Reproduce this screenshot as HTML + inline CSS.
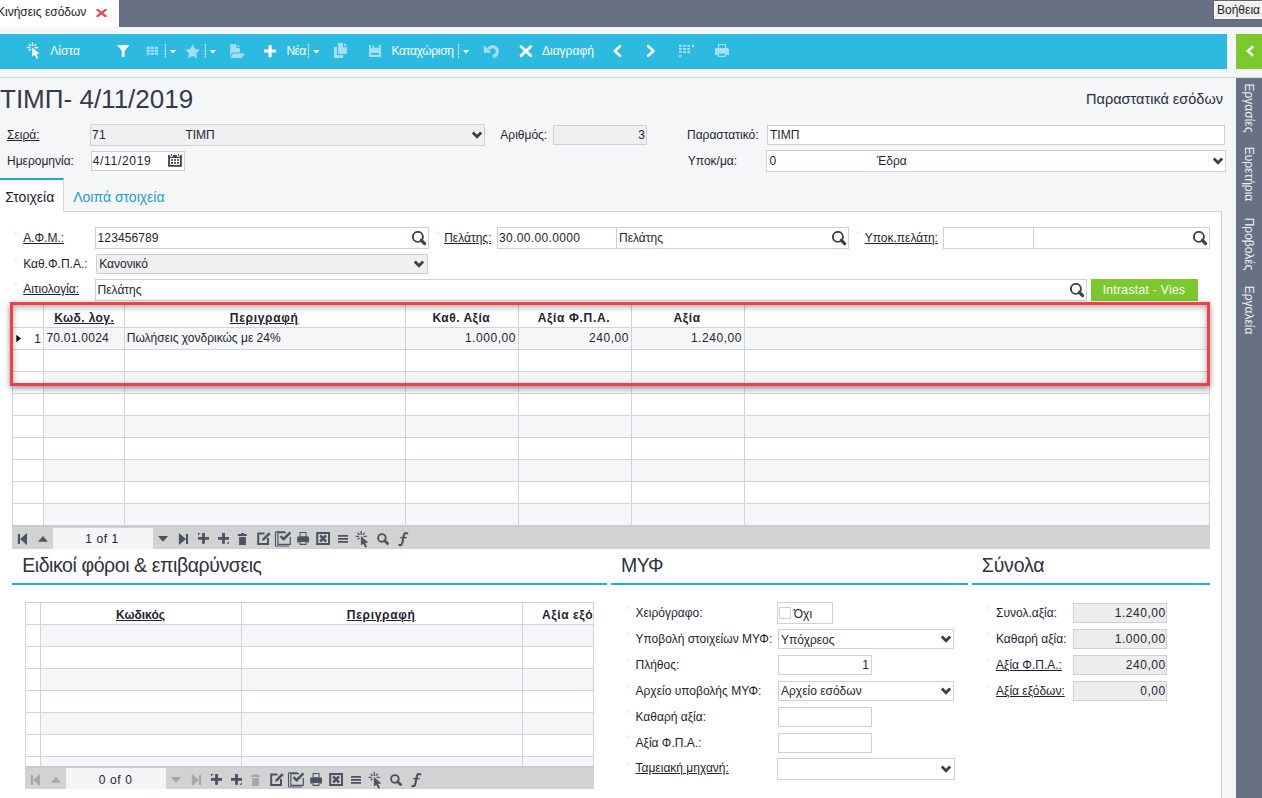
<!DOCTYPE html><html><head><meta charset="utf-8"><style>
html,body{margin:0;padding:0;}
body{width:1262px;height:798px;overflow:hidden;position:relative;background:#f5f6f8;font-family:'Liberation Sans', sans-serif;}
u{text-decoration:underline;text-underline-offset:1px;}
</style></head><body>
<div style="position:absolute;left:0px;top:0px;width:1262px;height:27px;background:#687184"></div>
<div style="position:absolute;left:0px;top:0px;width:119px;height:27px;background:#ffffff"></div>
<div style="position:absolute;left:-3px;top:6.34px;font-size:12px;line-height:1;color:#1a1a2a;font-weight:400;white-space:nowrap;">Κινήσεις εσόδων</div>
<svg style="position:absolute;left:96px;top:9px;" width="11" height="8" viewBox="0 0 11 8"><path d="M1.5 0.8 L9.5 7.2 M9.5 0.8 L1.5 7.2" stroke="#e8475a" stroke-width="2.2" stroke-linecap="square"/></svg>
<div style="position:absolute;left:1213px;top:0px;width:52px;height:20px;background:#f0f0f0;border:1px solid #646464;box-shadow:inset 0 0 0 1px #fff;box-sizing:border-box"></div>
<div style="position:absolute;left:1217px;top:3.84px;font-size:12px;line-height:1;color:#222;font-weight:400;white-space:nowrap;">Βοήθεια</div>
<div style="position:absolute;left:0px;top:34px;width:1227px;height:35px;background:#2dbae0"></div>
<div style="position:absolute;left:1236px;top:34px;width:26px;height:35px;background:#7cc92e"></div>
<svg style="position:absolute;left:1243px;top:44px;" width="14" height="14" viewBox="0 0 14 14"><path d="M10.2 2.2 L4.8 7 L10.2 11.8" stroke="#fff" stroke-width="2.5" fill="none"/></svg>
<svg style="position:absolute;left:0;top:34px" width="1227" height="35" viewBox="0 34 1227 35"><g stroke="#ffffff" stroke-width="1.3" stroke-linecap="round" fill="none"><path d="M32.5 42.6V45.6 M27.4 47.5H29.8 M35.3 47.5H37.7 M29.3 44.4L30.6 45.6 M34.4 45.6L35.6 44.4 M29.4 50.2L30.6 49.3"/></g><path d="M32.2 47.3 L32.2 56.6 L34.6 55 L36.6 58.9 L38.3 58 L36.4 54.3 L39.6 53.8 Z" fill="#ffffff"/><path d="M117 45 H129.4 L124.6 51 V56.8 H121.8 V51 Z" fill="#ffffff"/><rect x="146.6" y="46.7" width="3.1" height="2.2" fill="#a6dff2"/><rect x="146.6" y="49.7" width="3.1" height="2.2" fill="#a6dff2"/><rect x="146.6" y="52.7" width="3.1" height="2.2" fill="#a6dff2"/><rect x="150.7" y="46.7" width="3.1" height="2.2" fill="#a6dff2"/><rect x="150.7" y="49.7" width="3.1" height="2.2" fill="#a6dff2"/><rect x="150.7" y="52.7" width="3.1" height="2.2" fill="#a6dff2"/><rect x="154.8" y="46.7" width="3.1" height="2.2" fill="#a6dff2"/><rect x="154.8" y="49.7" width="3.1" height="2.2" fill="#a6dff2"/><rect x="154.8" y="52.7" width="3.1" height="2.2" fill="#a6dff2"/><line x1="165.4" y1="43.8" x2="165.4" y2="58" stroke="#ffffff" stroke-width="1.2" stroke-dasharray="1.9 1.1"/><path d="M169.8 50 H176.10000000000002 L172.95000000000002 53.6 Z" fill="#ffffff"/><line x1="205.4" y1="43.8" x2="205.4" y2="58" stroke="#ffffff" stroke-width="1.2" stroke-dasharray="1.9 1.1"/><path d="M209.6 50 H215.9 L212.75 53.6 Z" fill="#ffffff"/><line x1="308.5" y1="43.8" x2="308.5" y2="58" stroke="#ffffff" stroke-width="1.2" stroke-dasharray="1.9 1.1"/><path d="M313.2 50 H319.5 L316.34999999999997 53.6 Z" fill="#ffffff"/><line x1="458.5" y1="43.8" x2="458.5" y2="58" stroke="#ffffff" stroke-width="1.2" stroke-dasharray="1.9 1.1"/><path d="M462.9 50 H469.2 L466.04999999999995 53.6 Z" fill="#ffffff"/><polygon points="192.60,44.50 194.89,48.94 199.83,49.75 196.31,53.31 197.07,58.25 192.60,56.00 188.13,58.25 188.89,53.31 185.37,49.75 190.31,48.94" fill="#a6dff2"/><path d="M230.2 44.2 H236.3 V48 H239.9 V52.4 H232.4 L230.2 56.5 Z" fill="#a6dff2"/><path d="M237.3 44.2 L239.9 46.9 H237.3 Z" fill="#a6dff2"/><path d="M233.2 53.4 H244.9 L241.7 58 H230.4 Z" fill="#a6dff2"/><path d="M268.6 44.9 H271.6 V49.6 H276.2 V52.6 H271.6 V57.2 H268.6 V52.6 H263.9 V49.6 H268.6 Z" fill="#ffffff"/><path d="M334 46.9 H337 V55.1 H343.1 V58 H334 Z" fill="#a6dff2"/><path d="M338.1 43 H343 V47.2 H347 V54 H338.1 Z" fill="#a6dff2"/><path d="M344.1 43 L347 46.1 H344.1 Z" fill="#a6dff2"/><path d="M369 45 H371 V47.8 H372.8 V45 H374 V47.8 H379 V45 H381 V57 H369 Z M371 52.9 V54.8 H379 V52.9 Z" fill="#a6dff2" fill-rule="evenodd"/><path d="M488.44 49.1 A4.8 4.8 0 1 1 492.6 56.3" stroke="#a6dff2" stroke-width="3.1" fill="none"/><path d="M483.9 45.2 V52.8 H491.3 Z" fill="#a6dff2"/><path d="M521 46.5 L530.8 55.8 M530.8 46.5 L521 55.8" stroke="#ffffff" stroke-width="2.8" stroke-linecap="round"/><path d="M620 46.2 L614.8 51 L620 55.8" stroke="#ffffff" stroke-width="2.6" fill="none" stroke-linecap="round" stroke-linejoin="round"/><path d="M648.2 46.2 L653.4 51 L648.2 55.8" stroke="#ffffff" stroke-width="2.6" fill="none" stroke-linecap="round" stroke-linejoin="round"/><rect x="679.0" y="44.9" width="2.8" height="2" fill="#a6dff2"/><rect x="679.0" y="48.0" width="2.8" height="2" fill="#a6dff2"/><rect x="679.0" y="51.1" width="2.8" height="2" fill="#a6dff2"/><rect x="683.1" y="44.9" width="2.8" height="2" fill="#a6dff2"/><rect x="683.1" y="48.0" width="2.8" height="2" fill="#a6dff2"/><rect x="683.1" y="51.1" width="2.8" height="2" fill="#a6dff2"/><rect x="687.2" y="44.9" width="2.8" height="2" fill="#a6dff2"/><rect x="687.2" y="48.0" width="2.8" height="2" fill="#a6dff2"/><rect x="687.2" y="51.1" width="2.8" height="2" fill="#a6dff2"/><path d="M692.1 44.1 V48 L694.7 46 Z" fill="#a6dff2"/><path d="M677.9 55.2 H682 L680 57.5 Z" fill="#a6dff2"/><path d="M718.1 44 H726 V50 H718.1 Z M719.2 45.1 V49 H724.9 V45.1 Z" fill="#a6dff2" fill-rule="evenodd"/><path d="M716.5 48 H727.4 Q728.9 48 728.9 49.5 V55 H726 V53.6 H718.1 V55 H715 V49.5 Q715 48 716.5 48 Z" fill="#a6dff2"/><path d="M718.1 53.6 H726 V57 H718.1 Z M719.1 54.1 V55.7 H724.9 V54.1 Z" fill="#a6dff2" fill-rule="evenodd"/></svg>
<div style="position:absolute;left:50.3px;top:45.24px;font-size:12px;line-height:1;color:#ffffff;font-weight:400;white-space:nowrap;">Λίστα</div>
<div style="position:absolute;left:286.5px;top:45.44px;font-size:12px;line-height:1;color:#ffffff;font-weight:400;white-space:nowrap;letter-spacing:-0.6px">Νέα</div>
<div style="position:absolute;left:391.5px;top:45.44px;font-size:12px;line-height:1;color:#ffffff;font-weight:400;white-space:nowrap;letter-spacing:-0.3px">Καταχώριση</div>
<div style="position:absolute;left:542px;top:45.24px;font-size:12px;line-height:1;color:#ffffff;font-weight:400;white-space:nowrap;">Διαγραφή</div>
<div style="position:absolute;left:0px;top:77px;width:1262px;height:1px;background:#d5d7db"></div>
<div style="position:absolute;left:1236px;top:78px;width:26px;height:720px;background:#687184"></div>
<div style="position:absolute;left:1189px;top:101.1px;width:120px;height:14px;line-height:14px;text-align:center;font-size:12px;color:#eef0f4;white-space:nowrap;transform:rotate(90deg);transform-origin:60px 7px">Εργασίες</div>
<div style="position:absolute;left:1189px;top:166.8px;width:120px;height:14px;line-height:14px;text-align:center;font-size:12px;color:#eef0f4;white-space:nowrap;transform:rotate(90deg);transform-origin:60px 7px">Ευρετήρια</div>
<div style="position:absolute;left:1189px;top:236.8px;width:120px;height:14px;line-height:14px;text-align:center;font-size:12px;color:#eef0f4;white-space:nowrap;transform:rotate(90deg);transform-origin:60px 7px">Προβολές</div>
<div style="position:absolute;left:1189px;top:302.9px;width:120px;height:14px;line-height:14px;text-align:center;font-size:12px;color:#eef0f4;white-space:nowrap;transform:rotate(90deg);transform-origin:60px 7px">Εργαλεία</div>
<div style="position:absolute;left:0px;top:85.69px;font-size:26px;line-height:1;color:#363949;font-weight:400;white-space:nowrap;">ΤΙΜΠ- 4/11/2019</div>
<div style="position:absolute;right:39px;text-align:right;top:91.73px;font-size:14.5px;line-height:1;color:#2a2d3c;font-weight:400;white-space:nowrap;">Παραστατικά εσόδων</div>
<div style="position:absolute;left:7px;top:128.84px;font-size:12px;line-height:1;color:#1f2233;font-weight:400;white-space:nowrap;"><u>Σειρά:</u></div>
<div style="position:absolute;left:90px;top:124px;width:395px;height:22px;background:#f0f0f0;border:1px solid #cfd0d3;box-sizing:border-box"></div>
<div style="position:absolute;left:92px;top:128.84px;font-size:12px;line-height:1;color:#1f2233;font-weight:400;white-space:nowrap;letter-spacing:0.3px">71</div>
<div style="position:absolute;left:185.4px;top:128.84px;font-size:12px;line-height:1;color:#1f2233;font-weight:400;white-space:nowrap;">ΤΙΜΠ</div>
<svg style="position:absolute;left:470.5px;top:130.70000000000002px;" width="12" height="9" viewBox="0 0 12 9"><path d="M1.8 1.6 L6 5.8 L10.2 1.6" stroke="#3b3f4a" stroke-width="2.8" fill="none" stroke-linejoin="miter" stroke-linecap="butt"/></svg>
<div style="position:absolute;left:500.3px;top:128.84px;font-size:12px;line-height:1;color:#1f2233;font-weight:400;white-space:nowrap;">Αριθμός:</div>
<div style="position:absolute;left:553px;top:125px;width:94px;height:20px;background:#efefef;border:1px solid #cfd0d3;box-sizing:border-box"></div>
<div style="position:absolute;right:617px;text-align:right;top:128.84px;font-size:12px;line-height:1;color:#1f2233;font-weight:400;white-space:nowrap;">3</div>
<div style="position:absolute;left:687px;top:128.84px;font-size:12px;line-height:1;color:#1f2233;font-weight:400;white-space:nowrap;">Παραστατικό:</div>
<div style="position:absolute;left:767px;top:125px;width:458px;height:20px;background:#ffffff;border:1px solid #cfd0d3;box-sizing:border-box"></div>
<div style="position:absolute;left:770px;top:128.84px;font-size:12px;line-height:1;color:#1f2233;font-weight:400;white-space:nowrap;">ΤΙΜΠ</div>
<div style="position:absolute;left:7px;top:154.64px;font-size:12px;line-height:1;color:#1f2233;font-weight:400;white-space:nowrap;">Ημερομηνία:</div>
<div style="position:absolute;left:91px;top:151px;width:94px;height:20px;background:#ffffff;border:1px solid #cfd0d3;box-sizing:border-box"></div>
<div style="position:absolute;left:92.7px;top:154.54px;font-size:12px;line-height:1;color:#1f2233;font-weight:400;white-space:nowrap;letter-spacing:0.7px">4/11/2019</div>
<svg style="position:absolute;left:168px;top:154px;" width="14" height="13" viewBox="0 0 14 13"><path d="M0.1 2.8 H13.8 V12.7 H0.1 Z M1.9 4 V11 H12 V4 Z" fill="#3b3f4a" fill-rule="evenodd"/><rect x="0.1" y="0.9" width="1.8" height="2.6" fill="#3b3f4a"/><rect x="5" y="0.9" width="3.9" height="2.6" fill="#3b3f4a"/><rect x="12" y="0.9" width="1.8" height="2.6" fill="#3b3f4a"/><rect x="3.1" y="0" width="1" height="1.9" fill="#3b3f4a"/><rect x="10.1" y="0" width="1" height="1.9" fill="#3b3f4a"/><rect x="3.1" y="5.1" width="1.8" height="1.8" fill="#3b3f4a"/><rect x="3.1" y="8.0" width="1.8" height="1.8" fill="#3b3f4a"/><rect x="6.1" y="5.1" width="1.8" height="1.8" fill="#3b3f4a"/><rect x="6.1" y="8.0" width="1.8" height="1.8" fill="#3b3f4a"/><rect x="9.1" y="5.1" width="1.8" height="1.8" fill="#3b3f4a"/><rect x="9.1" y="8.0" width="1.8" height="1.8" fill="#3b3f4a"/></svg>
<div style="position:absolute;left:687.8px;top:154.84px;font-size:12px;line-height:1;color:#1f2233;font-weight:400;white-space:nowrap;">Υποκ/μα:</div>
<div style="position:absolute;left:766px;top:150px;width:460px;height:22px;background:#ffffff;border:1px solid #cfd0d3;box-sizing:border-box"></div>
<div style="position:absolute;left:769.5px;top:154.84px;font-size:12px;line-height:1;color:#1f2233;font-weight:400;white-space:nowrap;">0</div>
<div style="position:absolute;left:876.8px;top:154.84px;font-size:12px;line-height:1;color:#1f2233;font-weight:400;white-space:nowrap;">Έδρα</div>
<svg style="position:absolute;left:1211.5px;top:156.8px;" width="12" height="9" viewBox="0 0 12 9"><path d="M1.8 1.6 L6 5.8 L10.2 1.6" stroke="#3b3f4a" stroke-width="2.8" fill="none" stroke-linejoin="miter" stroke-linecap="butt"/></svg>
<div style="position:absolute;left:0px;top:211px;width:1222px;height:587px;background:#ffffff;border-top:1px solid #d3d4d7;border-right:1px solid #d3d4d7;box-sizing:border-box"></div>
<div style="position:absolute;left:0px;top:178px;width:64px;height:34px;background:#ffffff;border-top:2px solid #19a8d8;border-right:1px solid #d3d4d7;box-sizing:border-box"></div>
<div style="position:absolute;left:5.3px;top:189.95px;font-size:14px;line-height:1;color:#1e2030;font-weight:400;white-space:nowrap;">Στοιχεία</div>
<div style="position:absolute;left:73.2px;top:189.95px;font-size:14px;line-height:1;color:#1a9fd2;font-weight:400;white-space:nowrap;">Λοιπά στοιχεία</div>
<div style="position:absolute;left:13.5px;top:229.69px;font-size:11px;line-height:1;color:#eceef2;font-weight:400;white-space:nowrap;">*</div>
<div style="position:absolute;left:23.2px;top:231.84px;font-size:12px;line-height:1;color:#1f2233;font-weight:400;white-space:nowrap;"><u>Α.Φ.Μ.:</u></div>
<div style="position:absolute;left:95px;top:227px;width:334px;height:22px;background:#ffffff;border:1px solid #cfd0d3;box-sizing:border-box"></div>
<div style="position:absolute;left:97.6px;top:231.64px;font-size:12px;line-height:1;color:#1f2233;font-weight:400;white-space:nowrap;letter-spacing:0.1px">123456789</div>
<svg style="position:absolute;left:412px;top:231px;" width="15" height="15" viewBox="0 0 15 15"><circle cx="5.9" cy="5.9" r="5" stroke="#3b3f4a" stroke-width="1.9" fill="none"/><path d="M9.3 9.3 L12.6 12.6" stroke="#3b3f4a" stroke-width="3.2" stroke-linecap="round"/></svg>
<div style="position:absolute;left:435.5px;top:229.69px;font-size:11px;line-height:1;color:#eceef2;font-weight:400;white-space:nowrap;">*</div>
<div style="position:absolute;left:444.2px;top:231.84px;font-size:12px;line-height:1;color:#1f2233;font-weight:400;white-space:nowrap;"><u>Πελάτης:</u></div>
<div style="position:absolute;left:497px;top:227px;width:120px;height:22px;background:#ffffff;border:1px solid #cfd0d3;box-sizing:border-box"></div>
<div style="position:absolute;left:499px;top:231.64px;font-size:12px;line-height:1;color:#1f2233;font-weight:400;white-space:nowrap;letter-spacing:0.35px">30.00.00.0000</div>
<div style="position:absolute;left:616px;top:227px;width:233px;height:22px;background:#ffffff;border:1px solid #cfd0d3;box-sizing:border-box"></div>
<div style="position:absolute;left:619px;top:231.64px;font-size:12px;line-height:1;color:#1f2233;font-weight:400;white-space:nowrap;">Πελάτης</div>
<svg style="position:absolute;left:832px;top:231px;" width="15" height="15" viewBox="0 0 15 15"><circle cx="5.9" cy="5.9" r="5" stroke="#3b3f4a" stroke-width="1.9" fill="none"/><path d="M9.3 9.3 L12.6 12.6" stroke="#3b3f4a" stroke-width="3.2" stroke-linecap="round"/></svg>
<div style="position:absolute;left:855.5px;top:229.69px;font-size:11px;line-height:1;color:#eceef2;font-weight:400;white-space:nowrap;">*</div>
<div style="position:absolute;left:864.7px;top:231.84px;font-size:12px;line-height:1;color:#1f2233;font-weight:400;white-space:nowrap;"><u>Υποκ.πελάτη:</u></div>
<div style="position:absolute;left:943px;top:227px;width:91px;height:22px;background:#ffffff;border:1px solid #cfd0d3;box-sizing:border-box"></div>
<div style="position:absolute;left:1033px;top:227px;width:177px;height:22px;background:#ffffff;border:1px solid #cfd0d3;box-sizing:border-box"></div>
<svg style="position:absolute;left:1193px;top:231px;" width="15" height="15" viewBox="0 0 15 15"><circle cx="5.9" cy="5.9" r="5" stroke="#3b3f4a" stroke-width="1.9" fill="none"/><path d="M9.3 9.3 L12.6 12.6" stroke="#3b3f4a" stroke-width="3.2" stroke-linecap="round"/></svg>
<div style="position:absolute;left:13.5px;top:255.69px;font-size:11px;line-height:1;color:#eceef2;font-weight:400;white-space:nowrap;">*</div>
<div style="position:absolute;left:23.2px;top:257.84px;font-size:12px;line-height:1;color:#1f2233;font-weight:400;white-space:nowrap;">Καθ.Φ.Π.Α.:</div>
<div style="position:absolute;left:96px;top:254px;width:332px;height:20px;background:#f0f0f0;border:1px solid #cfd0d3;box-sizing:border-box"></div>
<div style="position:absolute;left:99.2px;top:258.44px;font-size:12px;line-height:1;color:#1f2233;font-weight:400;white-space:nowrap;">Κανονικό</div>
<svg style="position:absolute;left:412.5px;top:259.79999999999995px;" width="12" height="9" viewBox="0 0 12 9"><path d="M1.8 1.6 L6 5.8 L10.2 1.6" stroke="#3b3f4a" stroke-width="2.8" fill="none" stroke-linejoin="miter" stroke-linecap="butt"/></svg>
<div style="position:absolute;left:13.5px;top:280.69px;font-size:11px;line-height:1;color:#eceef2;font-weight:400;white-space:nowrap;">*</div>
<div style="position:absolute;left:23.2px;top:283.14px;font-size:12px;line-height:1;color:#1f2233;font-weight:400;white-space:nowrap;"><u>Αιτιολογία:</u></div>
<div style="position:absolute;left:95px;top:279px;width:992px;height:22px;background:#ffffff;border:1px solid #cfd0d3;box-sizing:border-box"></div>
<div style="position:absolute;left:97.6px;top:283.84px;font-size:12px;line-height:1;color:#1f2233;font-weight:400;white-space:nowrap;">Πελάτης</div>
<svg style="position:absolute;left:1070px;top:283px;" width="15" height="15" viewBox="0 0 15 15"><circle cx="5.9" cy="5.9" r="5" stroke="#3b3f4a" stroke-width="1.9" fill="none"/><path d="M9.3 9.3 L12.6 12.6" stroke="#3b3f4a" stroke-width="3.2" stroke-linecap="round"/></svg>
<div style="position:absolute;left:1091px;top:279px;width:107px;height:22px;background:#7cc92e"></div>
<div style="position:absolute;left:844px;width:600px;text-align:center;top:284.34px;font-size:12px;line-height:1;color:#ffffff;font-weight:400;white-space:nowrap;letter-spacing:0.35px">Intrastat - Vies</div>
<div style="position:absolute;left:12px;top:305px;width:1198px;height:220px;background:#ffffff"></div>
<div style="position:absolute;left:44px;top:328px;width:1165px;height:21px;background:#f5f6f8"></div>
<div style="position:absolute;left:44px;top:372px;width:1165px;height:21px;background:#f5f6f8"></div>
<div style="position:absolute;left:44px;top:416px;width:1165px;height:21px;background:#f5f6f8"></div>
<div style="position:absolute;left:44px;top:460px;width:1165px;height:21px;background:#f5f6f8"></div>
<div style="position:absolute;left:44px;top:504px;width:1165px;height:21px;background:#f5f6f8"></div>
<div style="position:absolute;left:12px;top:327px;width:1198px;height:1px;background:#d2d3d6"></div>
<div style="position:absolute;left:12px;top:349px;width:1198px;height:1px;background:#d2d3d6"></div>
<div style="position:absolute;left:12px;top:371px;width:1198px;height:1px;background:#d2d3d6"></div>
<div style="position:absolute;left:12px;top:393px;width:1198px;height:1px;background:#d2d3d6"></div>
<div style="position:absolute;left:12px;top:415px;width:1198px;height:1px;background:#d2d3d6"></div>
<div style="position:absolute;left:12px;top:437px;width:1198px;height:1px;background:#d2d3d6"></div>
<div style="position:absolute;left:12px;top:459px;width:1198px;height:1px;background:#d2d3d6"></div>
<div style="position:absolute;left:12px;top:481px;width:1198px;height:1px;background:#d2d3d6"></div>
<div style="position:absolute;left:12px;top:503px;width:1198px;height:1px;background:#d2d3d6"></div>
<div style="position:absolute;left:43px;top:305px;width:1px;height:220px;background:#d2d3d6"></div>
<div style="position:absolute;left:124px;top:305px;width:1px;height:220px;background:#d2d3d6"></div>
<div style="position:absolute;left:405px;top:305px;width:1px;height:220px;background:#d2d3d6"></div>
<div style="position:absolute;left:518px;top:305px;width:1px;height:220px;background:#d2d3d6"></div>
<div style="position:absolute;left:631px;top:305px;width:1px;height:220px;background:#d2d3d6"></div>
<div style="position:absolute;left:744px;top:305px;width:1px;height:220px;background:#d2d3d6"></div>
<div style="position:absolute;left:12px;top:305px;width:1px;height:220px;background:#d2d3d6"></div>
<div style="position:absolute;left:1209px;top:305px;width:1px;height:220px;background:#d2d3d6"></div>
<div style="position:absolute;left:-215.8px;width:600px;text-align:center;top:311.64px;font-size:12px;line-height:1;color:#1f2233;font-weight:700;white-space:nowrap;letter-spacing:0.4px"><u>Κωδ. λογ.</u></div>
<div style="position:absolute;left:-35.80000000000001px;width:600px;text-align:center;top:311.64px;font-size:12px;line-height:1;color:#1f2233;font-weight:700;white-space:nowrap;letter-spacing:0.7px"><u>Περιγραφή</u></div>
<div style="position:absolute;left:161.3px;width:600px;text-align:center;top:311.84px;font-size:12px;line-height:1;color:#1f2233;font-weight:700;white-space:nowrap;letter-spacing:0.5px">Καθ. Αξία</div>
<div style="position:absolute;left:274px;width:600px;text-align:center;top:311.84px;font-size:12px;line-height:1;color:#1f2233;font-weight:700;white-space:nowrap;letter-spacing:0.65px">Αξία Φ.Π.Α.</div>
<div style="position:absolute;left:387.1px;width:600px;text-align:center;top:311.84px;font-size:12px;line-height:1;color:#1f2233;font-weight:700;white-space:nowrap;letter-spacing:0.6px">Αξία</div>
<svg style="position:absolute;left:16px;top:334px;" width="6" height="9" viewBox="0 0 6 9"><path d="M0.3 0.8 L5 4.5 L0.3 8.2 Z" fill="#111"/></svg>
<div style="position:absolute;right:1221px;text-align:right;top:333.44px;font-size:12px;line-height:1;color:#1f2233;font-weight:400;white-space:nowrap;">1</div>
<div style="position:absolute;left:46.4px;top:332.44px;font-size:12px;line-height:1;color:#1f2233;font-weight:400;white-space:nowrap;letter-spacing:0.26px">70.01.0024</div>
<div style="position:absolute;left:126.8px;top:332.44px;font-size:12px;line-height:1;color:#1f2233;font-weight:400;white-space:nowrap;">Πωλήσεις χονδρικώς με 24%</div>
<div style="position:absolute;right:746px;text-align:right;top:332.44px;font-size:12px;line-height:1;color:#1f2233;font-weight:400;white-space:nowrap;letter-spacing:0.55px">1.000,00</div>
<div style="position:absolute;right:633px;text-align:right;top:332.44px;font-size:12px;line-height:1;color:#1f2233;font-weight:400;white-space:nowrap;letter-spacing:0.55px">240,00</div>
<div style="position:absolute;right:520px;text-align:right;top:332.44px;font-size:12px;line-height:1;color:#1f2233;font-weight:400;white-space:nowrap;letter-spacing:0.55px">1.240,00</div>
<div style="position:absolute;left:12px;top:525px;width:1198px;height:24px;background:#d2d2d3;border-top:2px solid #cacbce;box-sizing:border-box"></div>
<div style="position:absolute;left:53px;top:528px;width:100px;height:21px;background:#f4f5f7"></div>
<div style="position:absolute;left:-198px;width:600px;text-align:center;top:533.34px;font-size:12px;line-height:1;color:#1f2233;font-weight:400;white-space:nowrap;letter-spacing:0.6px">1 of 1</div>
<svg style="position:absolute;left:0;top:0" width="1262" height="798"><g transform="translate(0 0)"><path d="M17.9 534 H20 V544 H17.9 Z M20 539 L27 533 V544.9 Z" fill="#4b5263"/><path d="M38 541.8 H47.9 L43 536.1 Z" fill="#4b5263"/><path d="M157.9 535.9 H168.1 L163 541.7 Z" fill="#4b5263"/><path d="M178.9 533.1 V545 L186 539 Z M186 533.9 H188 V544 H186 Z" fill="#4b5263"/><path d="M202.1 533 H204.9 V537 H209 V539.8 H204.9 V543.8 H202.1 V539.8 H198 V537 H202.1 Z M198 533 H200.6 L198 535.6 Z" fill="#4b5263"/><path d="M222.1 533 H224.9 V537 H229 V539.8 H224.9 V543.8 H222.1 V539.8 H218 V537 H222.1 Z M229 541.3 V543.8 H226.5 Z" fill="#4b5263"/><path d="M241 533 H244 V534 H246.8 V536 H238 V534 H241 Z M239.1 537.1 H245.9 V544.9 H239.1 Z" fill="#4b5263"/><path d="M264.5 533.6 H258.2 V543.9 H268 V538" stroke="#4b5263" stroke-width="2" fill="none"/><path d="M262 541 L262.8 538.2 L268.8 532.2 L270.6 534 L264.6 540 Z" fill="#4b5263"/><path d="M284.9 531.7 H276.2 Q275.5 531.7 275.5 532.4 V545.3 Q275.5 546 276.2 546 H289.2" stroke="#4b5263" stroke-width="1.1" fill="none"/><path d="M286 532.6 H277.9 V544.4 H290.3 V537" stroke="#4b5263" stroke-width="1.2" fill="none"/><path d="M280.6 536.2 L283.6 539.2 L290.4 532.4" stroke="#4b5263" stroke-width="2.4" fill="none"/><path d="M299.6 532 H306.6 V537 H299.6 Z M300.6 533 V536.5 H305.6 V533 Z" fill="#4b5263" fill-rule="evenodd"/><path d="M298 536.5 H308.2 Q309 536.5 309 537.3 V542.6 H306.6 V541 H299.6 V542.6 H297.2 V537.3 Q297.2 536.5 298 536.5 Z" fill="#4b5263"/><path d="M299.6 541 H306.6 V545 H299.6 Z M300.6 542 V543.8 H305.6 V542 Z" fill="#4b5263" fill-rule="evenodd"/><path d="M317.2 533 H329 V543.9 H317.2 Z" stroke="#4b5263" stroke-width="2" fill="none"/><path d="M320.1 535.4 L326.1 541.5 M326.1 535.4 L320.1 541.5" stroke="#4b5263" stroke-width="2.5"/><path d="M338 535.9 H348 M338 538.8 H348 M338 541.8 H348" stroke="#4b5263" stroke-width="1.8"/><g transform="translate(328.7 488.8)"><g stroke="#4b5263" stroke-width="1.3" stroke-linecap="round" fill="none"><path d="M32.5 42.6V45.6 M27.4 47.5H29.8 M35.3 47.5H37.7 M29.3 44.4L30.6 45.6 M34.4 45.6L35.6 44.4 M29.4 50.2L30.6 49.3"/></g><path d="M32.2 47.3 L32.2 56.6 L34.6 55 L36.6 58.9 L38.3 58 L36.4 54.3 L39.6 53.8 Z" fill="#4b5263"/></g><circle cx="381.9" cy="537.9" r="3.8" stroke="#4b5263" stroke-width="1.9" fill="none"/><path d="M384.7 540.7 L387.6 543.6" stroke="#4b5263" stroke-width="2.8" stroke-linecap="round"/><path d="M407.3 533.4 C405.6 532.6 404.3 533.2 403.9 535.2 L402.3 543 C401.9 544.9 400.9 545.4 399.3 544.9" stroke="#4b5263" stroke-width="2.1" fill="none" stroke-linecap="round"/><path d="M400.3 537.6 H406.8" stroke="#4b5263" stroke-width="1.4"/></g></svg>
<div style="position:absolute;left:10px;top:302px;width:1200px;height:84px;border:3px solid #f23f47;box-sizing:border-box;box-shadow:0 2px 6px rgba(0,0,0,0.45), inset 0 2px 6px rgba(0,0,0,0.35)"></div>
<div style="position:absolute;left:22.2px;top:555.69px;font-size:19.5px;line-height:1;color:#2e3140;font-weight:400;white-space:nowrap;letter-spacing:-0.42px">Ειδικοί φόροι &amp; επιβαρύνσεις</div>
<div style="position:absolute;left:12px;top:583px;width:595px;height:2px;background:#16b3dc"></div>
<div style="position:absolute;left:621px;top:555.69px;font-size:19.5px;line-height:1;color:#2e3140;font-weight:400;white-space:nowrap;letter-spacing:-0.6px">ΜΥΦ</div>
<div style="position:absolute;left:611px;top:583px;width:357px;height:2px;background:#16b3dc"></div>
<div style="position:absolute;left:981.8px;top:555.69px;font-size:19.5px;line-height:1;color:#2e3140;font-weight:400;white-space:nowrap;letter-spacing:-0.2px">Σύνολα</div>
<div style="position:absolute;left:972px;top:583px;width:238px;height:2px;background:#16b3dc"></div>
<div style="position:absolute;left:25px;top:602px;width:569px;height:164px;background:#ffffff"></div>
<div style="position:absolute;left:41px;top:625px;width:553px;height:21px;background:#f5f6f8"></div>
<div style="position:absolute;left:41px;top:669px;width:553px;height:21px;background:#f5f6f8"></div>
<div style="position:absolute;left:41px;top:713px;width:553px;height:21px;background:#f5f6f8"></div>
<div style="position:absolute;left:41px;top:757px;width:553px;height:21px;background:#f5f6f8"></div>
<div style="position:absolute;left:25px;top:602px;width:569px;height:1px;background:#d2d3d6"></div>
<div style="position:absolute;left:25px;top:624px;width:569px;height:1px;background:#d2d3d6"></div>
<div style="position:absolute;left:25px;top:646px;width:569px;height:1px;background:#d2d3d6"></div>
<div style="position:absolute;left:25px;top:668px;width:569px;height:1px;background:#d2d3d6"></div>
<div style="position:absolute;left:25px;top:690px;width:569px;height:1px;background:#d2d3d6"></div>
<div style="position:absolute;left:25px;top:712px;width:569px;height:1px;background:#d2d3d6"></div>
<div style="position:absolute;left:25px;top:734px;width:569px;height:1px;background:#d2d3d6"></div>
<div style="position:absolute;left:25px;top:756px;width:569px;height:1px;background:#d2d3d6"></div>
<div style="position:absolute;left:40px;top:602px;width:1px;height:164px;background:#d2d3d6"></div>
<div style="position:absolute;left:241px;top:602px;width:1px;height:164px;background:#d2d3d6"></div>
<div style="position:absolute;left:522px;top:602px;width:1px;height:164px;background:#d2d3d6"></div>
<div style="position:absolute;left:25px;top:602px;width:1px;height:164px;background:#d2d3d6"></div>
<div style="position:absolute;left:593px;top:602px;width:1px;height:164px;background:#d2d3d6"></div>
<div style="position:absolute;left:-159.5px;width:600px;text-align:center;top:608.64px;font-size:12px;line-height:1;color:#1f2233;font-weight:700;white-space:nowrap;"><u>Κωδικός</u></div>
<div style="position:absolute;left:81.19999999999999px;width:600px;text-align:center;top:608.64px;font-size:12px;line-height:1;color:#1f2233;font-weight:700;white-space:nowrap;letter-spacing:0.7px"><u>Περιγραφή</u></div>
<div style="position:absolute;left:523px;top:602px;width:70px;height:22px;overflow:hidden"><div style="position:absolute;left:19px;top:6.64px;font-size:12px;line-height:1;font-weight:700;color:#1f2233;white-space:nowrap;letter-spacing:0.6px">Αξία εξόδων</div></div>
<div style="position:absolute;left:25px;top:766px;width:569px;height:23px;background:#d2d2d3;border-top:2px solid #cacbce;box-sizing:border-box"></div>
<div style="position:absolute;left:66px;top:768px;width:100px;height:21px;background:#f4f5f7"></div>
<div style="position:absolute;left:-184.4px;width:600px;text-align:center;top:773.54px;font-size:12px;line-height:1;color:#1f2233;font-weight:400;white-space:nowrap;letter-spacing:0.6px">0 of 0</div>
<svg style="position:absolute;left:0;top:0" width="594" height="798"><g transform="translate(13 241)"><path d="M17.9 534 H20 V544 H17.9 Z M20 539 L27 533 V544.9 Z" fill="#a3a7af"/><path d="M38 541.8 H47.9 L43 536.1 Z" fill="#a3a7af"/><path d="M157.9 535.9 H168.1 L163 541.7 Z" fill="#a3a7af"/><path d="M178.9 533.1 V545 L186 539 Z M186 533.9 H188 V544 H186 Z" fill="#a3a7af"/><path d="M202.1 533 H204.9 V537 H209 V539.8 H204.9 V543.8 H202.1 V539.8 H198 V537 H202.1 Z M198 533 H200.6 L198 535.6 Z" fill="#4b5263"/><path d="M222.1 533 H224.9 V537 H229 V539.8 H224.9 V543.8 H222.1 V539.8 H218 V537 H222.1 Z M229 541.3 V543.8 H226.5 Z" fill="#4b5263"/><path d="M241 533 H244 V534 H246.8 V536 H238 V534 H241 Z M239.1 537.1 H245.9 V544.9 H239.1 Z" fill="#a3a7af"/><path d="M264.5 533.6 H258.2 V543.9 H268 V538" stroke="#4b5263" stroke-width="2" fill="none"/><path d="M262 541 L262.8 538.2 L268.8 532.2 L270.6 534 L264.6 540 Z" fill="#4b5263"/><path d="M284.9 531.7 H276.2 Q275.5 531.7 275.5 532.4 V545.3 Q275.5 546 276.2 546 H289.2" stroke="#4b5263" stroke-width="1.1" fill="none"/><path d="M286 532.6 H277.9 V544.4 H290.3 V537" stroke="#4b5263" stroke-width="1.2" fill="none"/><path d="M280.6 536.2 L283.6 539.2 L290.4 532.4" stroke="#4b5263" stroke-width="2.4" fill="none"/><path d="M299.6 532 H306.6 V537 H299.6 Z M300.6 533 V536.5 H305.6 V533 Z" fill="#4b5263" fill-rule="evenodd"/><path d="M298 536.5 H308.2 Q309 536.5 309 537.3 V542.6 H306.6 V541 H299.6 V542.6 H297.2 V537.3 Q297.2 536.5 298 536.5 Z" fill="#4b5263"/><path d="M299.6 541 H306.6 V545 H299.6 Z M300.6 542 V543.8 H305.6 V542 Z" fill="#4b5263" fill-rule="evenodd"/><path d="M317.2 533 H329 V543.9 H317.2 Z" stroke="#4b5263" stroke-width="2" fill="none"/><path d="M320.1 535.4 L326.1 541.5 M326.1 535.4 L320.1 541.5" stroke="#4b5263" stroke-width="2.5"/><path d="M338 535.9 H348 M338 538.8 H348 M338 541.8 H348" stroke="#4b5263" stroke-width="1.8"/><g transform="translate(328.7 488.8)"><g stroke="#4b5263" stroke-width="1.3" stroke-linecap="round" fill="none"><path d="M32.5 42.6V45.6 M27.4 47.5H29.8 M35.3 47.5H37.7 M29.3 44.4L30.6 45.6 M34.4 45.6L35.6 44.4 M29.4 50.2L30.6 49.3"/></g><path d="M32.2 47.3 L32.2 56.6 L34.6 55 L36.6 58.9 L38.3 58 L36.4 54.3 L39.6 53.8 Z" fill="#4b5263"/></g><circle cx="381.9" cy="537.9" r="3.8" stroke="#4b5263" stroke-width="1.9" fill="none"/><path d="M384.7 540.7 L387.6 543.6" stroke="#4b5263" stroke-width="2.8" stroke-linecap="round"/><path d="M407.3 533.4 C405.6 532.6 404.3 533.2 403.9 535.2 L402.3 543 C401.9 544.9 400.9 545.4 399.3 544.9" stroke="#4b5263" stroke-width="2.1" fill="none" stroke-linecap="round"/><path d="M400.3 537.6 H406.8" stroke="#4b5263" stroke-width="1.4"/></g></svg>
<div style="position:absolute;left:625.5px;top:604.69px;font-size:11px;line-height:1;color:#eceef2;font-weight:400;white-space:nowrap;">*</div>
<div style="position:absolute;left:635.5px;top:607.04px;font-size:12px;line-height:1;color:#1f2233;font-weight:400;white-space:nowrap;">Χειρόγραφο:</div>
<div style="position:absolute;left:777px;top:602px;width:56px;height:22px;background:#ffffff;border:1px solid #cfd0d3;box-sizing:border-box"></div>
<div style="position:absolute;left:779px;top:607px;width:12px;height:12px;background:#ffffff;border:1px solid #cfd0d3;box-sizing:border-box"></div>
<div style="position:absolute;left:793.8px;top:607.54px;font-size:12px;line-height:1;color:#1f2233;font-weight:400;white-space:nowrap;">Όχι</div>
<div style="position:absolute;left:625.5px;top:630.69px;font-size:11px;line-height:1;color:#eceef2;font-weight:400;white-space:nowrap;">*</div>
<div style="position:absolute;left:635.5px;top:632.84px;font-size:12px;line-height:1;color:#1f2233;font-weight:400;white-space:nowrap;">Υποβολή στοιχείων ΜΥΦ:</div>
<div style="position:absolute;left:778px;top:629px;width:176px;height:20px;background:#ffffff;border:1px solid #cfd0d3;box-sizing:border-box"></div>
<div style="position:absolute;left:781px;top:633.64px;font-size:12px;line-height:1;color:#1f2233;font-weight:400;white-space:nowrap;">Υπόχρεος</div>
<svg style="position:absolute;left:939.5px;top:634.9px;" width="12" height="9" viewBox="0 0 12 9"><path d="M1.8 1.6 L6 5.8 L10.2 1.6" stroke="#3b3f4a" stroke-width="2.8" fill="none" stroke-linejoin="miter" stroke-linecap="butt"/></svg>
<div style="position:absolute;left:625.5px;top:656.69px;font-size:11px;line-height:1;color:#eceef2;font-weight:400;white-space:nowrap;">*</div>
<div style="position:absolute;left:635.5px;top:658.84px;font-size:12px;line-height:1;color:#1f2233;font-weight:400;white-space:nowrap;">Πλήθος:</div>
<div style="position:absolute;left:778px;top:655px;width:94px;height:20px;background:#ffffff;border:1px solid #cfd0d3;box-sizing:border-box"></div>
<div style="position:absolute;right:393px;text-align:right;top:659.34px;font-size:12px;line-height:1;color:#1f2233;font-weight:400;white-space:nowrap;">1</div>
<div style="position:absolute;left:625.5px;top:682.69px;font-size:11px;line-height:1;color:#eceef2;font-weight:400;white-space:nowrap;">*</div>
<div style="position:absolute;left:635.5px;top:684.84px;font-size:12px;line-height:1;color:#1f2233;font-weight:400;white-space:nowrap;">Αρχείο υποβολής ΜΥΦ:</div>
<div style="position:absolute;left:778px;top:681px;width:176px;height:20px;background:#ffffff;border:1px solid #cfd0d3;box-sizing:border-box"></div>
<div style="position:absolute;left:781px;top:685.34px;font-size:12px;line-height:1;color:#1f2233;font-weight:400;white-space:nowrap;">Αρχείο εσόδων</div>
<svg style="position:absolute;left:939.5px;top:686.8px;" width="12" height="9" viewBox="0 0 12 9"><path d="M1.8 1.6 L6 5.8 L10.2 1.6" stroke="#3b3f4a" stroke-width="2.8" fill="none" stroke-linejoin="miter" stroke-linecap="butt"/></svg>
<div style="position:absolute;left:625.5px;top:708.69px;font-size:11px;line-height:1;color:#eceef2;font-weight:400;white-space:nowrap;">*</div>
<div style="position:absolute;left:635.5px;top:711.14px;font-size:12px;line-height:1;color:#1f2233;font-weight:400;white-space:nowrap;">Καθαρή αξία:</div>
<div style="position:absolute;left:778px;top:707px;width:94px;height:20px;background:#ffffff;border:1px solid #cfd0d3;box-sizing:border-box"></div>
<div style="position:absolute;left:625.5px;top:733.69px;font-size:11px;line-height:1;color:#eceef2;font-weight:400;white-space:nowrap;">*</div>
<div style="position:absolute;left:635.5px;top:736.64px;font-size:12px;line-height:1;color:#1f2233;font-weight:400;white-space:nowrap;">Αξία Φ.Π.Α.:</div>
<div style="position:absolute;left:778px;top:733px;width:94px;height:20px;background:#ffffff;border:1px solid #cfd0d3;box-sizing:border-box"></div>
<div style="position:absolute;left:625.5px;top:759.69px;font-size:11px;line-height:1;color:#eceef2;font-weight:400;white-space:nowrap;">*</div>
<div style="position:absolute;left:635.5px;top:762.24px;font-size:12px;line-height:1;color:#1f2233;font-weight:400;white-space:nowrap;"><u>Ταμειακή μηχανή:</u></div>
<div style="position:absolute;left:777px;top:758px;width:178px;height:22px;background:#ffffff;border:1px solid #cfd0d3;box-sizing:border-box"></div>
<svg style="position:absolute;left:940px;top:764.6999999999999px;" width="12" height="9" viewBox="0 0 12 9"><path d="M1.8 1.6 L6 5.8 L10.2 1.6" stroke="#3b3f4a" stroke-width="2.8" fill="none" stroke-linejoin="miter" stroke-linecap="butt"/></svg>
<div style="position:absolute;left:986.5px;top:604.69px;font-size:11px;line-height:1;color:#eceef2;font-weight:400;white-space:nowrap;">*</div>
<div style="position:absolute;left:996px;top:606.84px;font-size:12px;line-height:1;color:#1f2233;font-weight:400;white-space:nowrap;">Συνολ.αξία:</div>
<div style="position:absolute;left:1073px;top:603px;width:94px;height:20px;background:#ededee;border:1px solid #cfd0d3;box-sizing:border-box"></div>
<div style="position:absolute;right:96.20000000000005px;text-align:right;top:607.04px;font-size:12px;line-height:1;color:#1f2233;font-weight:400;white-space:nowrap;letter-spacing:0.55px">1.240,00</div>
<div style="position:absolute;left:986.5px;top:630.69px;font-size:11px;line-height:1;color:#eceef2;font-weight:400;white-space:nowrap;">*</div>
<div style="position:absolute;left:996px;top:632.84px;font-size:12px;line-height:1;color:#1f2233;font-weight:400;white-space:nowrap;">Καθαρή αξία:</div>
<div style="position:absolute;left:1073px;top:629px;width:94px;height:20px;background:#ededee;border:1px solid #cfd0d3;box-sizing:border-box"></div>
<div style="position:absolute;right:96.20000000000005px;text-align:right;top:633.04px;font-size:12px;line-height:1;color:#1f2233;font-weight:400;white-space:nowrap;letter-spacing:0.55px">1.000,00</div>
<div style="position:absolute;left:986.5px;top:656.69px;font-size:11px;line-height:1;color:#eceef2;font-weight:400;white-space:nowrap;">*</div>
<div style="position:absolute;left:996px;top:658.84px;font-size:12px;line-height:1;color:#1f2233;font-weight:400;white-space:nowrap;"><u>Αξία Φ.Π.Α.:</u></div>
<div style="position:absolute;left:1073px;top:655px;width:94px;height:20px;background:#ededee;border:1px solid #cfd0d3;box-sizing:border-box"></div>
<div style="position:absolute;right:96.20000000000005px;text-align:right;top:659.04px;font-size:12px;line-height:1;color:#1f2233;font-weight:400;white-space:nowrap;letter-spacing:0.55px">240,00</div>
<div style="position:absolute;left:986.5px;top:682.69px;font-size:11px;line-height:1;color:#eceef2;font-weight:400;white-space:nowrap;">*</div>
<div style="position:absolute;left:996px;top:684.84px;font-size:12px;line-height:1;color:#1f2233;font-weight:400;white-space:nowrap;"><u>Αξία εξόδων:</u></div>
<div style="position:absolute;left:1073px;top:681px;width:94px;height:20px;background:#ededee;border:1px solid #cfd0d3;box-sizing:border-box"></div>
<div style="position:absolute;right:96.20000000000005px;text-align:right;top:685.04px;font-size:12px;line-height:1;color:#1f2233;font-weight:400;white-space:nowrap;letter-spacing:0.55px">0,00</div>
</body></html>
